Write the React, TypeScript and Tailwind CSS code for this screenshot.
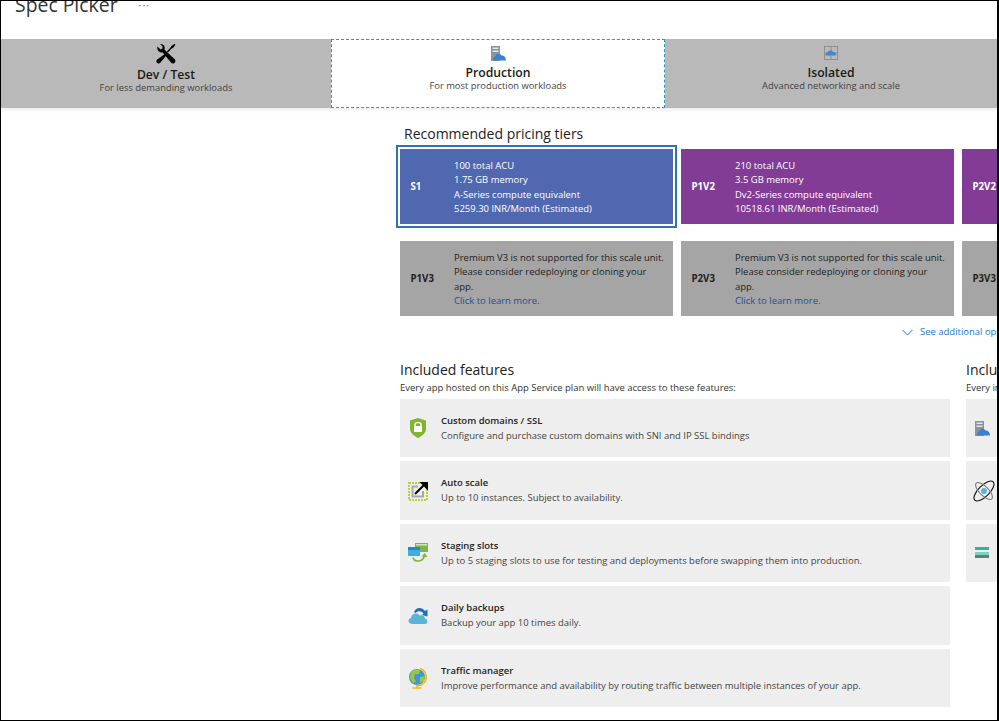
import React from 'react';

const font = { fontFamily: '"Open Sans", "Noto Sans", sans-serif' };

function ToolsIcon() {
  return (
    <svg width="20" height="20" viewBox="0 0 20 20">
      <path d="M1.5 2.5 L4.5 5.5 L6.5 4.5 L6.5 2 L4 .5 C7-.5 9.5 2 8.5 5.5 L12.5 9.5 L19 15.5 C19.8 16.8 19.3 18.2 18.4 19 C17.2 20 16 19.6 15 18.5 L9.5 12 L6.5 8.2 C3 9.2 .5 6 1.5 2.5 Z" fill="#000" />
      <path d="M19.5 .5 L17 4 L15.6 4.6 L11.9 8.4 L10.9 7.4 L14.6 3.6 L15.2 2.2 L18.5 -.2 Z" fill="#000" />
      <path d="M8.5 10.2 L10 11.7 L4.5 18.5 C3.5 19.8 2 19.8 1 18.8 C0 17.8 0.2 16.2 1.5 15.2 Z" fill="#000" />
    </svg>
  );
}

function ServerCloud() {
  return (
    <svg width="15" height="15" viewBox="0 0 15 15">
      <rect x="0" y="0" width="9" height="15" fill="#8b929a" />
      <rect x="1.5" y="1.5" width="6" height="1.5" fill="#dbe6f0" />
      <rect x="1.5" y="4.5" width="6" height="1.5" fill="#dbe6f0" />
      <path d="M3.5 14.5 C1.5 14.5 1.5 11 4 11 C4.5 7.5 9 6.5 10.5 9.5 C13 9 15 11.5 15 14.5 Z" fill="#3c7fd0" />
    </svg>
  );
}

function IsolatedIcon() {
  return (
    <svg width="14" height="14" viewBox="0 0 14 14">
      <rect x=".5" y=".5" width="13" height="13" fill="none" stroke="#8f8f8f" />
      <path d="M7 0 V14 M0 7 H14" stroke="#8f8f8f" />
      <path d="M2.5 9.5 C1 9.5 1 7 3 7 C3.5 4.5 7.5 3.5 9 6 C11 5.5 12.5 7.5 11.8 9.5 Z" fill="#3c86dc" />
    </svg>
  );
}

function ShieldIcon() {
  return (
    <svg width="20" height="20" viewBox="0 0 20 20">
      <path d="M10 0 L18 2.5 V11 C18 15 14 18 10 20 C6 18 2 15 2 11 V2.5 Z" fill="#7fb52f" />
      <path d="M7 8 V6.5 C7 3.8 13 3.8 13 6.5 V8" fill="none" stroke="#fff" strokeWidth="1.4" />
      <rect x="6" y="8" width="8" height="6" fill="#fff" />
    </svg>
  );
}

function ScaleIcon() {
  return (
    <svg width="20" height="20" viewBox="0 0 20 20">
      <rect x="1" y="2" width="18" height="17" fill="none" stroke="#b8d432" strokeWidth="2" strokeDasharray="2 1" />
      <path d="M4.5 5.5 H10 M4.5 5 V15.5 H15 V10" fill="none" stroke="#a9a9a9" strokeWidth="2" />
      <path d="M7 13 L16 4" stroke="#000" strokeWidth="2" />
      <path d="M11.5 1 H20 V9.5 Z" fill="#000" />
    </svg>
  );
}

function SlotsIcon() {
  return (
    <svg width="20" height="20" viewBox="0 0 20 20">
      <rect x="7" y="0" width="13" height="9" fill="#7ab648" />
      <rect x="8" y="1" width="11" height="1.5" fill="#cfe6b5" />
      <rect x="0" y="4" width="12" height="9" fill="#38b1e0" />
      <rect x="0" y="4" width="12" height="3" fill="#2a86bf" />
      <path d="M5 14.5 C6 19 14 20 16.5 13" fill="none" stroke="#7ab648" strokeWidth="1.6" />
      <path d="M13.5 13.5 L16.8 10 L19.5 14 Z" fill="#7ab648" />
    </svg>
  );
}

function BackupIcon() {
  return (
    <svg width="20" height="20" viewBox="0 0 20 20">
      <path d="M4 18 C0 18 -1 13 3 12 C3.5 7.5 9 6 11.5 9.5 C14 8.5 17 10 17 12.5 C20 13 20.5 18 17 18 Z" fill="#59b4d9" />
      <path d="M6 6 C8 1 14 1 17 5 L19.5 3.5 V10.5 L14 9 L15.5 7.5 C13.5 5 10 4.5 7.5 7 Z" fill="#1f6fbd" />
    </svg>
  );
}

function GlobeIcon() {
  return (
    <svg width="20" height="21" viewBox="0 0 20 21">
      <circle cx="9" cy="9" r="8" fill="#3f96d8" />
      <path d="M3 4 C6 1 10 1 12 2 L11 6 L7 6 L6 10 L8 14 L5 15 L2 10 Z M12 9 L17 8 L16 13 L12 15 Z" fill="#9ec73b" />
      <path d="M12 .5 C18 2 20 10 16 15 C14 17 11 18 8 17.5" fill="none" stroke="#f5bb14" strokeWidth="1.6" />
      <path d="M9 17.5 V19.5 M4.5 20 H13.5" stroke="#f5bb14" strokeWidth="1.6" />
    </svg>
  );
}

function AtomIcon() {
  return (
    <svg width="22" height="22" viewBox="0 0 22 22">
      <circle cx="11" cy="11" r="3" fill="#59b4d9" />
      <ellipse cx="11" cy="11" rx="13" ry="5.5" fill="none" stroke="#111" strokeWidth="1.1" transform="rotate(-45 11 11)" />
      <ellipse cx="11" cy="11" rx="11" ry="4.5" fill="none" stroke="#777" strokeWidth="1" transform="rotate(45 11 11)" />
    </svg>
  );
}

function StackIcon() {
  return (
    <svg width="14" height="12" viewBox="0 0 14 12">
      <rect x="0" y="0" width="14" height="3" fill="#32b39c" />
      <rect x="0" y="5" width="14" height="3" fill="#7fd1c2" />
      <rect x="0" y="8" width="14" height="3" fill="#5f7f78" />
    </svg>
  );
}

function Tab({ icon, title, sub, active, pad, titleGap }: { icon: React.ReactNode; title: string; sub: string; active?: boolean; pad: string; titleGap: string }) {
  return (
    <div className={`flex flex-col items-center ${pad} ${active ? 'bg-white border border-dashed border-[#1b9ccb]' : 'bg-[#b9b9b9]'}`}>
      <div className="flex h-5 items-center justify-center">{icon}</div>
      <div className={`${titleGap} text-[12.2px] leading-[14px] font-semibold text-[#1a1a1a]`}>{title}</div>
      <div className="text-[9.4px] leading-[11px] text-[#444]">{sub}</div>
    </div>
  );
}

function TierCard({ name, lines, color, dark, link }: { name: string; lines: string[]; color: string; dark?: boolean; link?: boolean }) {
  return (
    <div className={`flex h-[75px] w-[273px] shrink-0 items-center ${color} ${dark ? 'text-white' : 'text-[#222]'}`}>
      <div className="w-[54px] shrink-0 pl-[10.5px] text-[9.7px] leading-[14px] font-bold">{name}</div>
      <div className="pt-[2px] text-[9.47px] leading-[14.2px]">
        {lines.map((l) => (
          <div key={l} className="whitespace-nowrap">{l}</div>
        ))}
        {link && <div className="text-[#1f4e9e]">Click to learn more.</div>}
      </div>
    </div>
  );
}

function Feature({ icon, title, text, h }: { icon: React.ReactNode; title: string; text: string; h: string }) {
  return (
    <div className={`flex w-[550px] items-center bg-[#eeeeee] ${h}`}>
      <div className="flex w-[41px] shrink-0 justify-start pl-[8px]">{icon}</div>
      <div className="pb-[1px] text-[9.47px] leading-[15px]">
        <div className="font-semibold text-[#222]">{title}</div>
        <div className="whitespace-nowrap text-[#444]">{text}</div>
      </div>
    </div>
  );
}

const v3Lines = [
  'Premium V3 is not supported for this scale unit.',
  'Please consider redeploying or cloning your',
  'app.',
];

export default function App() {
  return (
    <div className="h-[721px] w-[999px] overflow-hidden border-t border-l border-b border-r-2 border-black bg-white" style={font}>
      <div className="flex h-[38px] items-start pl-[14px]">
        <div className="-mt-[9px] text-[19.4px] leading-[26px] text-[#333]">Spec Picker</div>
        <div className="-mt-[3px] ml-[21px] text-[11px] leading-[14px] tracking-[1px] text-[#666]">···</div>
      </div>

      <div className="grid h-[69px] grid-cols-[330px_334px_1fr] shadow-[0_2px_4px_rgba(0,0,0,0.08)]">
        <Tab icon={<ToolsIcon />} title="Dev / Test" sub="For less demanding workloads" pad="pt-[5px]" titleGap="mt-1" />
        <Tab icon={<ServerCloud />} title="Production" sub="For most production workloads" active pad="pt-[3px]" titleGap="mt-[3px]" />
        <Tab icon={<IsolatedIcon />} title="Isolated" sub="Advanced networking and scale" pad="pt-[4px]" titleGap="mt-[3px]" />
      </div>

      <div className="pl-[399px]">
        <div className="mt-[17px] pl-[4px] text-[14px] leading-[18px] text-[#222]">Recommended pricing tiers</div>

        <div className="mt-[6px] flex gap-2">
          <div className="shrink-0 outline-2 outline-offset-2 outline-[#2b74b8]">
            <TierCard
              name="S1"
              color="bg-[#5068b0]"
              dark
              lines={['100 total ACU', '1.75 GB memory', 'A-Series compute equivalent', '5259.30 INR/Month (Estimated)']}
            />
          </div>
          <TierCard
            name="P1V2"
            color="bg-[#823c95]"
            dark
            lines={['210 total ACU', '3.5 GB memory', 'Dv2-Series compute equivalent', '10518.61 INR/Month (Estimated)']}
          />
          <TierCard name="P2V2" color="bg-[#823c95]" dark lines={[]} />
        </div>

        <div className="mt-[17px] flex gap-2">
          <TierCard name="P1V3" color="bg-[#a5a5a5]" lines={v3Lines} link />
          <TierCard name="P2V3" color="bg-[#a5a5a5]" lines={v3Lines} link />
          <TierCard name="P3V3" color="bg-[#a5a5a5]" lines={[]} />
        </div>

        <div className="mt-[9px] flex h-[14px] items-center pl-[502px]">
          <svg width="11" height="7" viewBox="0 0 11 7" className="shrink-0">
            <path d="M.5 1 L5.5 6 L10.5 1" fill="none" stroke="#1979c8" />
          </svg>
          <span className="ml-[7px] text-[9.47px] whitespace-nowrap text-[#1979c8]">See additional options</span>
        </div>

        <div className="mt-[22px] flex gap-4">
          <div className="w-[550px] shrink-0">
            <div className="text-[14px] leading-[18px] text-[#222]">Included features</div>
            <div className="mt-[1px] mb-[4px] text-[9.47px] leading-[15px] text-[#333]">
              Every app hosted on this App Service plan will have access to these features:
            </div>
            <div className="flex flex-col gap-1">
              <Feature h="h-[58px]" icon={<ShieldIcon />} title="Custom domains / SSL" text="Configure and purchase custom domains with SNI and IP SSL bindings" />
              <Feature h="h-[59px]" icon={<ScaleIcon />} title="Auto scale" text="Up to 10 instances. Subject to availability." />
              <Feature h="h-[58px]" icon={<SlotsIcon />} title="Staging slots" text="Up to 5 staging slots to use for testing and deployments before swapping them into production." />
              <Feature h="h-[59px]" icon={<BackupIcon />} title="Daily backups" text="Backup your app 10 times daily." />
              <Feature h="h-[58px]" icon={<GlobeIcon />} title="Traffic manager" text="Improve performance and availability by routing traffic between multiple instances of your app." />
            </div>
          </div>
          <div className="w-[300px] shrink-0">
            <div className="text-[14px] leading-[18px] text-[#222]">Included hardware</div>
            <div className="mt-[1px] mb-[4px] text-[9.47px] leading-[15px] text-[#333]">Every instance in your App Service plan</div>
            <div className="flex flex-col gap-1">
              <div className="flex h-[58px] items-center bg-[#eeeeee] pl-[9px]"><ServerCloud /></div>
              <div className="flex h-[59px] items-center bg-[#eeeeee] pl-[7px]"><AtomIcon /></div>
              <div className="flex h-[58px] items-center bg-[#eeeeee] pl-[9px]"><StackIcon /></div>
            </div>
          </div>
        </div>
      </div>
    </div>
  );
}
